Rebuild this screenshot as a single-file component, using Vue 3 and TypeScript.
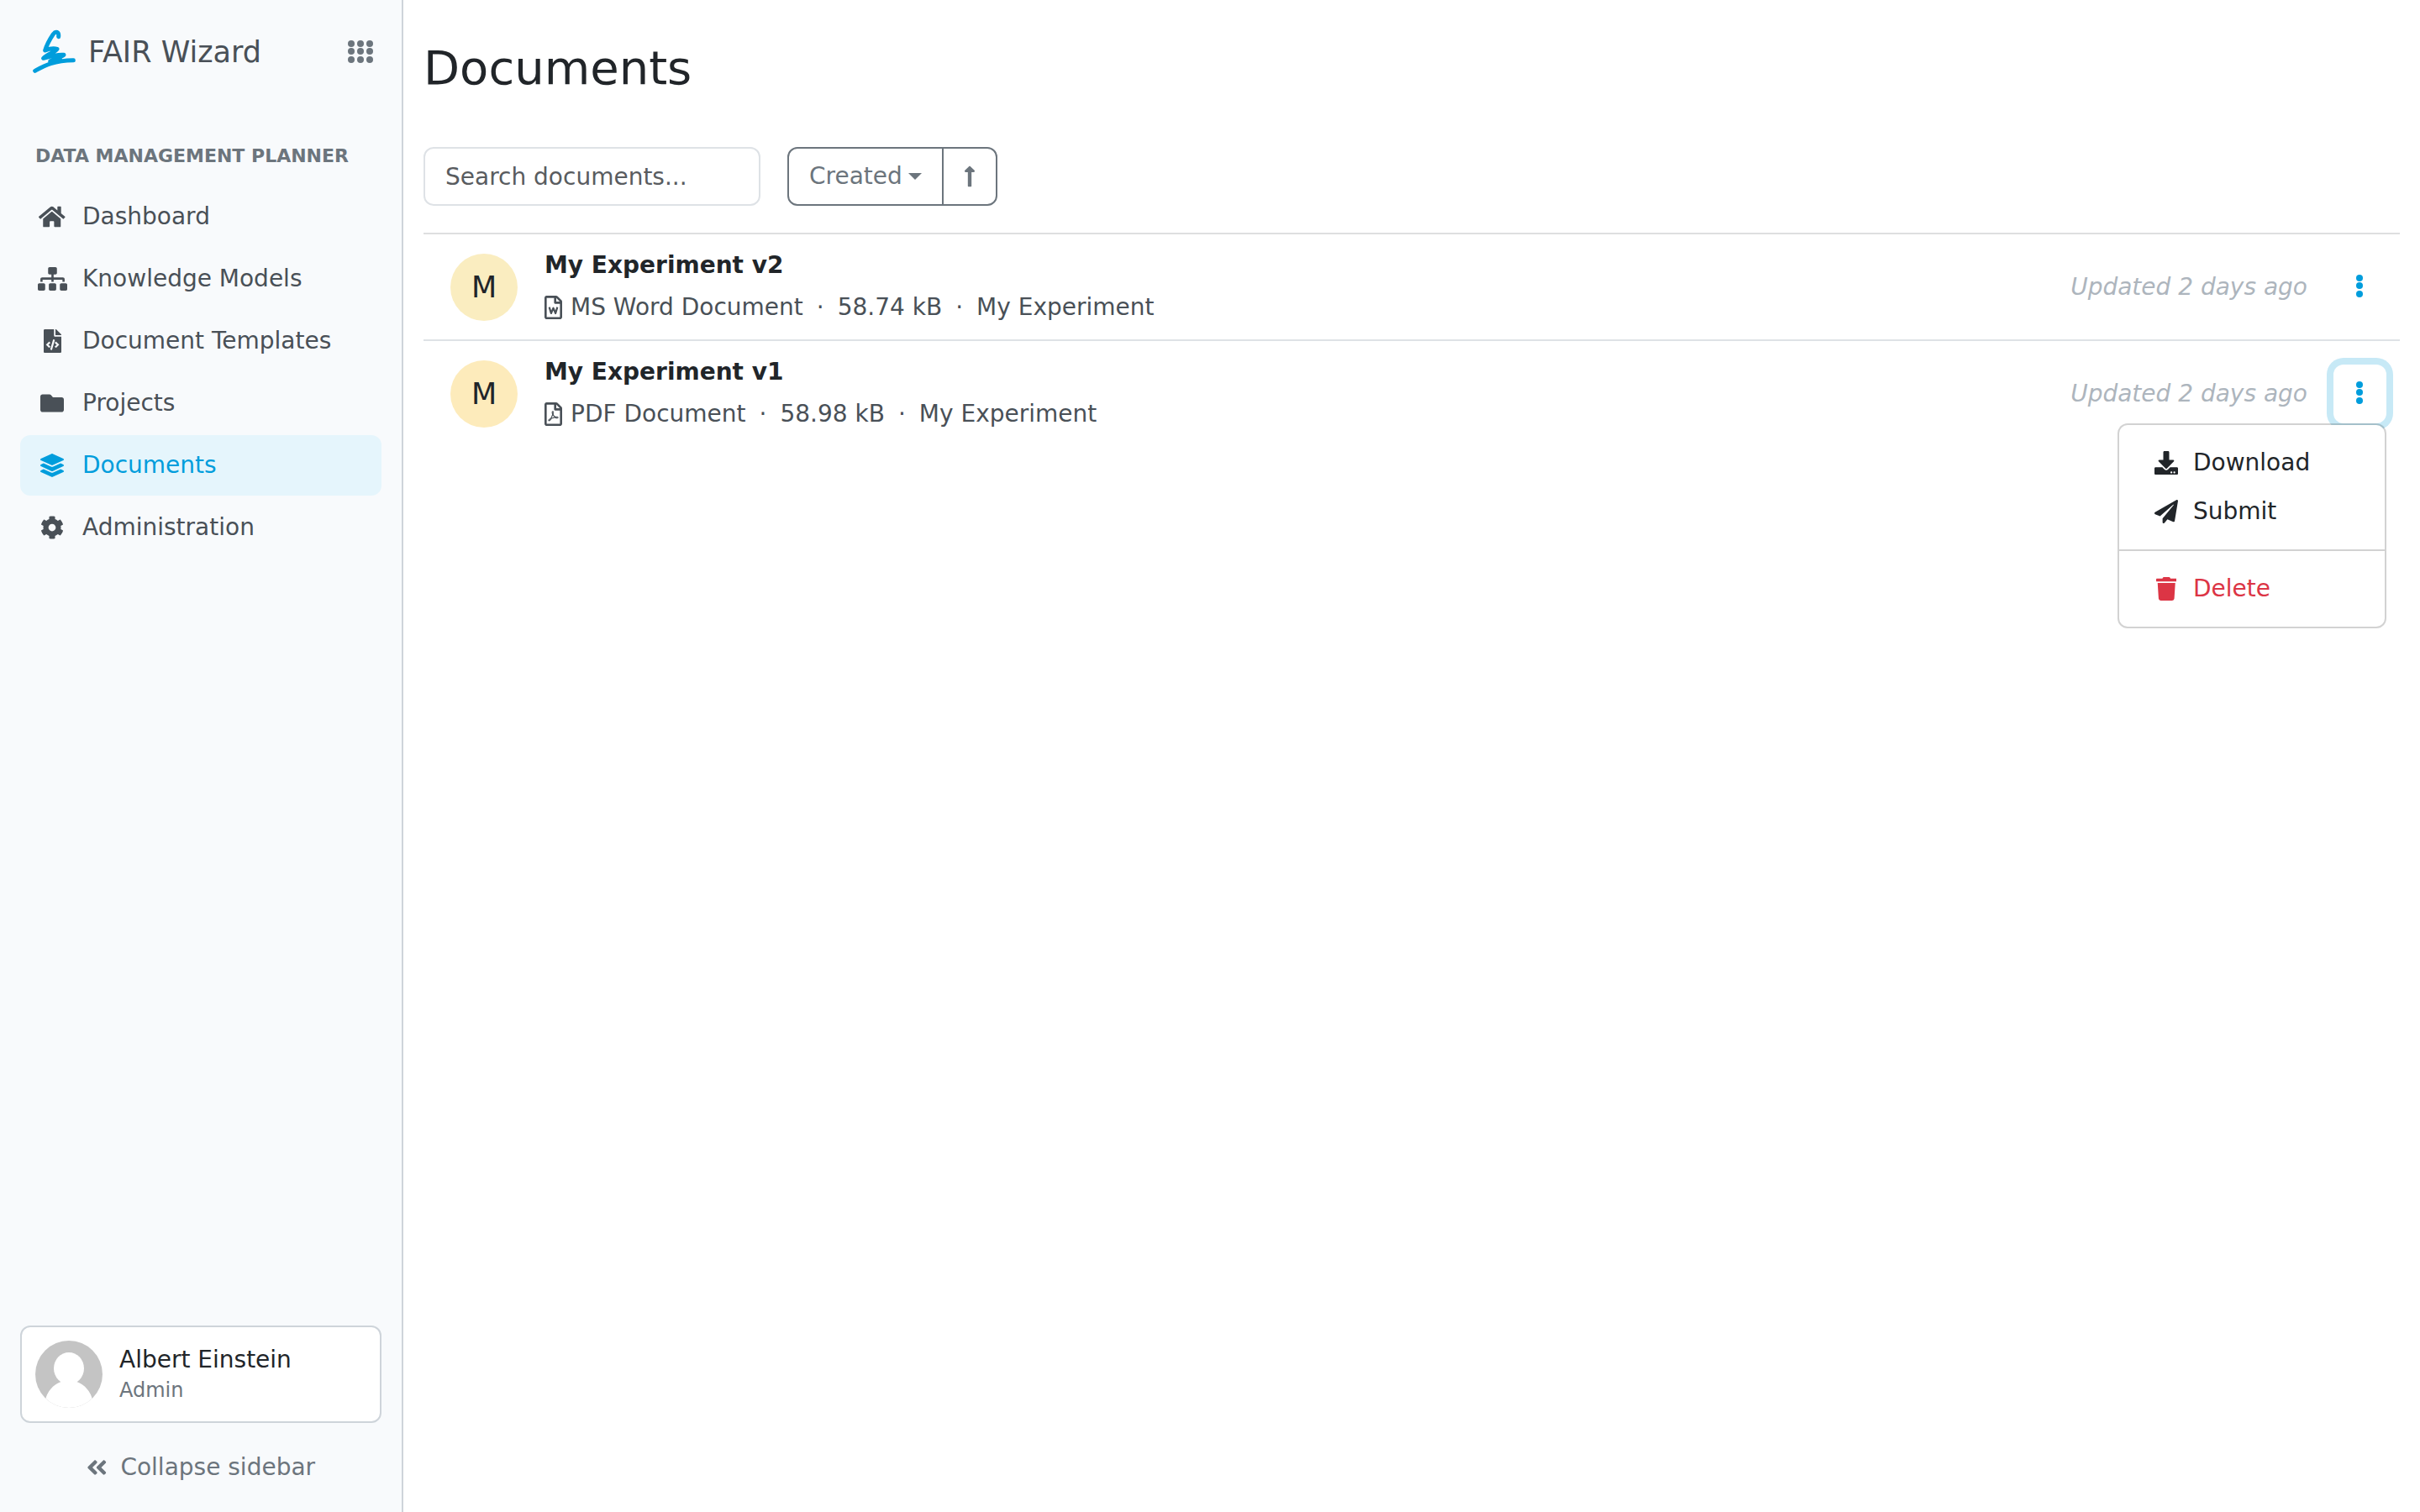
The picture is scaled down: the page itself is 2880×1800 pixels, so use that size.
<script setup lang="ts">
import { ref } from 'vue'

interface Icon {
  w: number
  d: string
}

const icons: Record<string, Icon> = {
  house: {
    w: 576,
    d: 'M280.37 148.26L96 300.11V464a16 16 0 0 0 16 16l112.06-.29a16 16 0 0 0 15.92-16V368a16 16 0 0 1 16-16h64a16 16 0 0 1 16 16v95.64a16 16 0 0 0 16 16.05L464 480a16 16 0 0 0 16-16V300L295.67 148.26a12.19 12.19 0 0 0-15.3 0zM571.6 251.47L488 182.56V44.05a12 12 0 0 0-12-12h-56a12 12 0 0 0-12 12v72.61L318.47 43a48 48 0 0 0-61 0L4.34 251.47a12 12 0 0 0-1.6 16.9l25.5 31A12 12 0 0 0 45.15 301l235.22-193.74a12.19 12.19 0 0 1 15.3 0L530.9 301a12 12 0 0 0 16.9-1.6l25.5-31a12 12 0 0 0-1.7-16.93z',
  },
  sitemap: {
    w: 640,
    d: 'M128 352H32c-17.67 0-32 14.33-32 32v96c0 17.67 14.33 32 32 32h96c17.67 0 32-14.33 32-32v-96c0-17.67-14.33-32-32-32zm-24-80h192v48h48v-48h192v48h48v-57.59c0-21.17-17.23-38.41-38.41-38.41H344v-64h40c17.67 0 32-14.33 32-32V32c0-17.67-14.33-32-32-32H256c-17.67 0-32 14.33-32 32v96c0 17.67 14.33 32 32 32h40v64H94.41C73.24 224 56 241.23 56 262.41V320h48v-48zm264 80h-96c-17.67 0-32 14.33-32 32v96c0 17.67 14.33 32 32 32h96c17.67 0 32-14.33 32-32v-96c0-17.67-14.33-32-32-32zm240 0h-96c-17.67 0-32 14.33-32 32v96c0 17.67 14.33 32 32 32h96c17.67 0 32-14.33 32-32v-96c0-17.67-14.33-32-32-32z',
  },
  code: {
    w: 384,
    d: 'M384 121.941V128H256V0h6.059c6.365 0 12.47 2.529 16.971 7.029l97.941 97.941A24.005 24.005 0 0 1 384 121.941zM248 160c-13.2 0-24-10.8-24-24V0H24C10.745 0 0 10.745 0 24v464c0 13.255 10.745 24 24 24h336c13.255 0 24-10.745 24-24V160H248zM123.206 400.505a5.4 5.4 0 0 1-7.633.246l-64.866-60.812a5.4 5.4 0 0 1 0-7.879l64.866-60.812a5.4 5.4 0 0 1 7.633.246l19.579 20.885a5.4 5.4 0 0 1-.372 7.747L101.65 336l40.763 35.874a5.4 5.4 0 0 1 .372 7.747l-19.579 20.884zm51.295 50.479l-27.97-8.121a5.402 5.402 0 0 1-3.667-6.692l61.44-211.626a5.402 5.402 0 0 1 6.692-3.667l27.97 8.121a5.4 5.4 0 0 1 3.667 6.692l-61.44 211.626a5.397 5.397 0 0 1-6.692 3.667zm160.792-111.045l-64.866 60.812a5.4 5.4 0 0 1-7.633-.246l-19.58-20.885a5.4 5.4 0 0 1 .372-7.747L284.35 336l-40.763-35.874a5.4 5.4 0 0 1-.372-7.747l19.58-20.885a5.4 5.4 0 0 1 7.633-.246l64.866 60.812a5.4 5.4 0 0 1-.001 7.879z',
  },
  folder: {
    w: 512,
    d: 'M464 128H290c-16 0-22-6-32-18l-22-26c-11-13-22-20-40-20H48C21.49 64 0 85.49 0 112v288c0 26.51 21.49 48 48 48h416c26.51 0 48-21.49 48-48V176c0-26.51-21.49-48-48-48z',
  },
  layers: {
    w: 512,
    d: 'M12.41 148.02l232.94 105.67c6.8 3.09 14.49 3.09 21.29 0l232.94-105.67c16.55-7.51 16.55-32.52 0-40.03L266.65 2.31a25.607 25.607 0 0 0-21.29 0L12.41 107.98c-16.55 7.51-16.55 32.53 0 40.04zm487.18 88.28l-58.09-26.33-161.64 73.27c-7.56 3.43-15.59 5.17-23.86 5.17s-16.29-1.74-23.86-5.17L70.51 209.97l-58.1 26.33c-16.55 7.5-16.55 32.5 0 40l232.94 105.59c6.8 3.08 14.49 3.08 21.29 0L499.59 276.3c16.55-7.5 16.55-32.5 0-40zm0 127.8l-57.87-26.23-161.86 73.37c-7.56 3.43-15.59 5.17-23.86 5.17s-16.29-1.74-23.86-5.17L70.29 337.87 12.41 364.1c-16.55 7.5-16.55 32.5 0 40l232.94 105.59c6.8 3.08 14.49 3.08 21.29 0L499.59 404.1c16.55-7.5 16.55-32.5 0-40z',
  },
  gear: {
    w: 512,
    d: 'M487.4 315.7l-42.6-24.6c4.3-23.2 4.3-47 0-70.2l42.6-24.6c4.9-2.8 7.1-8.6 5.5-14-11.1-35.6-30-67.8-54.7-94.6-3.8-4.1-10-5.1-14.8-2.3L380.8 110c-17.9-15.4-38.5-27.3-60.8-35.1V25.8c0-5.6-3.9-10.5-9.4-11.7-36.7-8.2-74.3-7.8-109.2 0-5.5 1.2-9.4 6.1-9.4 11.7V75c-22.2 7.9-42.8 19.8-60.8 35.1L88.7 85.5c-4.9-2.8-11-1.9-14.8 2.3-24.7 26.7-43.6 58.9-54.7 94.6-1.7 5.4.6 11.2 5.5 14L67.3 221c-4.3 23.2-4.3 47 0 70.2l-42.6 24.6c-4.9 2.8-7.1 8.6-5.5 14 11.1 35.6 30 67.8 54.7 94.6 3.8 4.1 10 5.1 14.8 2.3l42.6-24.6c17.9 15.4 38.5 27.3 60.8 35.1v49.2c0 5.6 3.9 10.5 9.4 11.7 36.7 8.2 74.3 7.8 109.2 0 5.5-1.2 9.4-6.1 9.4-11.7v-49.2c22.2-7.9 42.8-19.8 60.8-35.1l42.6 24.6c4.9 2.8 11 1.9 14.8-2.3 24.7-26.7 43.6-58.9 54.7-94.6 1.5-5.5-.7-11.3-5.6-14.1zM256 336c-44.1 0-80-35.9-80-80s35.9-80 80-80 80 35.9 80 80-35.9 80-80 80z',
  },
  download: {
    w: 512,
    d: 'M216 0h80c13.3 0 24 10.7 24 24v168h87.7c17.8 0 26.7 21.5 14.1 34.1L269.7 378.3c-7.5 7.5-19.8 7.5-27.3 0L90.1 226.1c-12.6-12.6-3.7-34.1 14.1-34.1H192V24c0-13.3 10.7-24 24-24zm296 376v112c0 13.3-10.7 24-24 24H24c-13.3 0-24-10.7-24-24V376c0-13.3 10.7-24 24-24h146.7l49 49c20.1 20.1 52.5 20.1 72.6 0l49-49H488c13.3 0 24 10.7 24 24zm-124 88c0-11-9-20-20-20s-20 9-20 20 9 20 20 20 20-9 20-20zm64 0c0-11-9-20-20-20s-20 9-20 20 9 20 20 20 20-9 20-20z',
  },
  plane: {
    w: 512,
    d: 'M476 3.2L12.5 270.6c-18.1 10.4-15.8 35.6 2.2 43.2L121 358.4l287.3-253.2c5.5-4.9 13.3 2.6 8.6 8.3L176 407v80.5c0 23.6 28.5 32.9 42.5 15.8L282 426l124.6 52.2c14.2 6 30.4-2.9 33-18.2l72-432C515 7.8 493.3-6.8 476 3.2z',
  },
  trash: {
    w: 448,
    d: 'M432 32H312l-9.4-18.7A24 24 0 0 0 281.1 0H166.8a23.72 23.72 0 0 0-21.4 13.3L136 32H16A16 16 0 0 0 0 48v32a16 16 0 0 0 16 16h416a16 16 0 0 0 16-16V48a16 16 0 0 0-16-16zM53.2 467a48 48 0 0 0 47.9 45h245.8a48 48 0 0 0 47.9-45L416 128H32z',
  },
  collapse: {
    w: 448,
    d: 'M223.7 239l136-136c9.4-9.4 24.6-9.4 33.9 0l22.6 22.6c9.4 9.4 9.4 24.6 0 33.9L319.9 256l96.4 96.4c9.4 9.4 9.4 24.6 0 33.9L393.7 409c-9.4 9.4-24.6 9.4-33.9 0l-136-136c-9.5-9.4-9.5-24.6-.1-34zm-192 34l136 136c9.4 9.4 24.6 9.4 33.9 0l22.6-22.6c9.4-9.4 9.4-24.6 0-33.9L127.9 256l96.4-96.4c9.4-9.4 9.4-24.6 0-33.9L201.7 103c-9.4-9.4-24.6-9.4-33.9 0l-136 136c-9.5 9.4-9.5 24.6-.1 34z',
  },
  arrowUp: {
    w: 256,
    d: 'M88 166.059V468c0 6.627 5.373 12 12 12h56c6.627 0 12-5.373 12-12V166.059h46.059c21.382 0 32.09-25.851 16.971-40.971l-86.059-86.059c-9.373-9.373-24.569-9.373-33.941 0l-86.059 86.059c-15.119 15.119-4.411 40.971 16.971 40.971H88z',
  },
}

const filePath =
  'M369.9 97.9L286 14C277 5 264.8-.1 252.1-.1H48C21.5 0 0 21.5 0 48v416c0 26.5 21.5 48 48 48h288c26.5 0 48-21.5 48-48V131.9c0-12.7-5.1-25-14.1-34zM332.1 128H256V51.9l76.1 76.1zM48 464V48h160v104c0 13.3 10.7 24 24 24h104v288H48z'
const pdfPath =
  'M298.2 314.5c-12.2-12-47-8.7-64.4-6.5-17.2-10.5-28.7-25-36.8-46.3 3.9-16.1 10.1-40.6 5.4-56-4.2-26.2-37.8-23.6-42.6-5.9-4.4 16.1-.4 38.5 7 67.1-10 23.9-24.9 56-35.4 74.4-20 10.3-47 26.2-51 46.2-3.3 15.8 26 55.2 76.1-31.2 22.4-7.4 46.8-16.5 68.4-20.1 18.9 10.2 41 17 55.8 17 25.5 0 28-28.2 17.5-38.7zm-198.1 77.8c5.1-13.7 24.5-29.5 30.4-35-19 30.3-30.4 35.7-30.4 35zm81.6-190.6c7.4 0 6.7 32.1 1.8 40.8-4.4-13.9-4.3-40.8-1.8-40.8zm-24.4 136.6c9.7-16.9 18-37 24.7-54.7 8.3 15.1 18.9 27.2 30.1 35.5-20.8 4.3-38.9 13.1-54.8 19.2zm131.6-5s-5 6-37.3-7.8c35.1-2.6 40.9 5.4 37.3 7.8z'

const navItems = [
  { label: 'Dashboard', icon: 'house' },
  { label: 'Knowledge Models', icon: 'sitemap' },
  { label: 'Document Templates', icon: 'code' },
  { label: 'Projects', icon: 'folder' },
  { label: 'Documents', icon: 'layers' },
  { label: 'Administration', icon: 'gear' },
]
const activeItem = ref('Documents')

const documents = [
  { id: 2, name: 'My Experiment v2', kind: 'word', format: 'MS Word Document', size: '58.74 kB', project: 'My Experiment', tint: '#faedc0' },
  { id: 1, name: 'My Experiment v1', kind: 'pdf', format: 'PDF Document', size: '58.98 kB', project: 'My Experiment', tint: '#fdebbb' },
]

const query = ref('')
const sortBy = ref('Created')
const openMenu = ref<number | null>(1)

function toggleMenu(id: number) {
  openMenu.value = openMenu.value === id ? null : id
}
</script>

<template>
  <div class="app">
    <aside class="sidebar">
      <header class="brand">
        <a href="#" class="brand-link">
          <svg class="logo" viewBox="114 106 159 159" fill="none" stroke="currentColor" stroke-width="15" stroke-linecap="round" stroke-linejoin="round">
            <path d="M209 132C211 114 199 111 190 123C178 141 167 161 161 181C178 174 194 173 204 176C197 187 168 195 155 209C180 202 208 195 228 197C214 206 196 211 180 220" />
            <path d="M125 254C158 236 190 217 262 216M180 220L215 214" />
          </svg>
          <span>FAIR Wizard</span>
        </a>
        <button type="button" class="apps" aria-label="Apps">
          <svg class="apps-icon" viewBox="0 0 30 28" fill="currentColor">
            <template v-for="y in [4, 13, 23]" :key="y">
              <circle v-for="x in [4, 15, 26]" :key="x" :cx="x" :cy="y" r="4" />
            </template>
          </svg>
        </button>
      </header>

      <h2 class="section">DATA MANAGEMENT PLANNER</h2>
      <nav class="nav">
        <a
          v-for="item in navItems"
          :key="item.label"
          href="#"
          class="nav-item"
          :class="{ active: item.label === activeItem }"
          @click.prevent="activeItem = item.label"
        >
          <span class="nav-icon">
            <svg class="icon" :viewBox="`0 0 ${icons[item.icon].w} 512`" fill="currentColor"><path :d="icons[item.icon].d" /></svg>
          </span>
          <span>{{ item.label }}</span>
        </a>
      </nav>

      <footer class="side-footer">
        <button type="button" class="profile">
          <svg class="photo" viewBox="0 0 80 80">
            <defs>
              <clipPath id="photo-clip"><circle cx="40" cy="40" r="40" /></clipPath>
            </defs>
            <g clip-path="url(#photo-clip)">
              <rect width="80" height="80" fill="#c4c4c4" />
              <ellipse cx="40" cy="33" rx="18" ry="19" fill="#fff" />
              <path d="M10 80C12 60 22 52 31 49H49C58 52 68 60 70 80Z" fill="#fff" />
            </g>
          </svg>
          <span class="profile-text">
            <span class="profile-name">Albert Einstein</span>
            <span class="profile-role">Admin</span>
          </span>
        </button>
        <button type="button" class="collapse">
          <svg class="icon" :viewBox="`0 0 ${icons.collapse.w} 512`" fill="currentColor"><path :d="icons.collapse.d" /></svg>
          <span>Collapse sidebar</span>
        </button>
      </footer>
    </aside>

    <main class="main">
      <h1 class="title">Documents</h1>

      <div class="toolbar">
        <input v-model="query" class="search" type="text" placeholder="Search documents..." aria-label="Search documents..." />
        <div class="sort">
          <div class="sort-field">
            <select v-model="sortBy" class="sort-select" aria-label="Created">
              <option>Created</option>
            </select>
            <span class="caret"></span>
          </div>
          <button type="button" class="sort-direction" aria-label="Sort direction">
            <svg class="icon" viewBox="0 0 256 512" fill="currentColor"><path :d="icons.arrowUp.d" /></svg>
          </button>
        </div>
      </div>

      <ul class="list">
        <li v-for="doc in documents" :key="doc.id" class="row">
          <span class="initial" :style="{ backgroundColor: doc.tint }">M</span>
          <div class="details">
            <a href="#" class="name">{{ doc.name }}</a>
            <div class="meta">
              <span class="format">
                <svg class="icon" viewBox="0 0 384 512" fill="currentColor">
                  <path :d="filePath" />
                  <path v-if="doc.kind === 'pdf'" :d="pdfPath" />
                  <path v-else d="M104 250L144 384L192 268L240 384L280 250" fill="none" stroke="currentColor" stroke-width="40" stroke-linejoin="round" />
                </svg>
                <span>{{ doc.format }}</span>
              </span>
              <span>·</span>
              <span>{{ doc.size }}</span>
              <span>·</span>
              <a href="#" class="project">{{ doc.project }}</a>
            </div>
          </div>
          <span class="updated">Updated 2 days ago</span>
          <div class="actions">
            <button type="button" class="more" :class="{ open: openMenu === doc.id }" aria-label="Actions" @click="toggleMenu(doc.id)">
              <svg class="dots" viewBox="0 0 8 28" fill="currentColor">
                <circle cx="4" cy="4" r="4" />
                <circle cx="4" cy="13" r="4" />
                <circle cx="4" cy="23" r="4" />
              </svg>
            </button>
            <div v-if="openMenu === doc.id" class="menu">
              <a href="#" class="menu-item">
                <span class="menu-icon"><svg class="icon" viewBox="0 0 512 512" fill="currentColor"><path :d="icons.download.d" /></svg></span>
                <span>Download</span>
              </a>
              <a href="#" class="menu-item">
                <span class="menu-icon"><svg class="icon" viewBox="0 0 512 512" fill="currentColor"><path :d="icons.plane.d" /></svg></span>
                <span>Submit</span>
              </a>
              <hr class="menu-divider" />
              <a href="#" class="menu-item danger">
                <span class="menu-icon"><svg class="icon" viewBox="0 0 448 512" fill="currentColor"><path :d="icons.trash.d" /></svg></span>
                <span>Delete</span>
              </a>
            </div>
          </div>
        </li>
      </ul>
    </main>
  </div>
</template>

<style>
body {
  margin: 0;
  background: #fff;
}
</style>

<style scoped>
.app,
.app * {
  box-sizing: border-box;
}
.app {
  display: flex;
  min-height: 100vh;
  color: #212529;
  font-family: 'DejaVu Sans', sans-serif;
  font-size: 28px;
  line-height: 42px;
}
a {
  color: inherit;
  text-decoration: none;
}
button,
input,
select {
  margin: 0;
  font: inherit;
  color: inherit;
  background: none;
  border: 0;
}
button {
  padding: 0;
  cursor: pointer;
}
svg {
  display: block;
  flex: none;
}
.icon {
  height: 28px;
  width: auto;
}

.sidebar {
  display: flex;
  flex-direction: column;
  flex: none;
  width: 480px;
  padding: 0 24px;
  background: #f8fafc;
  border-right: 2px solid #ced4da;
}
.brand {
  display: flex;
  align-items: center;
  justify-content: space-between;
  height: 123px;
  padding: 0 10px 0 14px;
}
.brand-link {
  display: flex;
  align-items: center;
  gap: 14px;
  color: #495057;
  font-size: 35px;
}
.logo {
  width: 53px;
  height: 53px;
  color: #009ddc;
}
.apps {
  color: #6c757d;
}
.apps-icon {
  width: 30px;
  height: 28px;
}
.section {
  margin: 42px 0 15px;
  padding: 0 18px;
  color: #6c757d;
  font-size: 22px;
  line-height: 42px;
  white-space: nowrap;
}
.nav {
  display: flex;
  flex-direction: column;
  gap: 2px;
}
.nav-item {
  display: flex;
  align-items: center;
  gap: 18px;
  height: 72px;
  padding: 0 20px;
  border-radius: 12px;
  color: #495057;
}
.nav-item.active {
  background: #e5f5fc;
  color: #009ddc;
}
.nav-icon {
  display: flex;
  justify-content: center;
  width: 36px;
}
.side-footer {
  margin-top: auto;
}
.profile {
  display: flex;
  align-items: center;
  gap: 20px;
  width: 100%;
  height: 116px;
  padding: 0 16px;
  background: #fff;
  border: 2px solid #ced4da;
  border-radius: 12px;
  text-align: left;
}
.photo {
  width: 80px;
  height: 80px;
}
.profile-text {
  display: flex;
  flex-direction: column;
  padding-top: 2px;
  line-height: 36px;
}
.profile-role {
  color: #6c757d;
  font-size: 24px;
}
.collapse {
  display: flex;
  align-items: center;
  justify-content: center;
  gap: 16px;
  width: 100%;
  height: 106px;
  color: #6c757d;
}

.main {
  flex: 1;
  min-width: 0;
  padding: 0 24px;
}
.title {
  margin: 47px 0 61px;
  font-size: 56px;
  font-weight: 400;
  line-height: 67px;
}
.toolbar {
  display: flex;
  gap: 32px;
  margin-bottom: 32px;
}
.search {
  width: 401px;
  height: 70px;
  padding: 0 24px;
  border: 2px solid #dee2e6;
  border-radius: 12px;
  background: #fff;
}
.search::placeholder {
  color: #595c5f;
  opacity: 1;
}
.sort {
  display: flex;
  height: 70px;
  border: 2px solid #6c757d;
  border-radius: 12px;
  color: #6c757d;
}
.sort-field {
  display: grid;
  align-items: center;
}
.sort-select {
  grid-area: 1 / 1;
  height: 66px;
  width: 182px;
  padding: 0 24px;
  appearance: none;
}
.caret {
  grid-area: 1 / 1;
  justify-self: end;
  margin-right: 24px;
  border-top: 8px solid currentColor;
  border-left: 8px solid transparent;
  border-right: 8px solid transparent;
  pointer-events: none;
}
.sort-direction {
  display: flex;
  align-items: center;
  justify-content: center;
  width: 64px;
  border-left: 2px solid #6c757d;
}

.list {
  margin: 0;
  padding: 0;
  list-style: none;
  border-top: 2px solid #dedfe0;
}
.row {
  display: flex;
  align-items: center;
  padding: 16px 16px 16px 32px;
}
.row + .row {
  border-top: 2px solid #dee2e6;
}
.initial {
  flex: none;
  width: 80px;
  border-radius: 50%;
  font-size: 35px;
  line-height: 80px;
  text-align: center;
}
.details {
  display: flex;
  flex-direction: column;
  gap: 8px;
  flex: 1;
  min-width: 0;
  padding-bottom: 1px;
  margin-left: 32px;
}
.name {
  font-weight: 700;
}
.meta {
  display: flex;
  gap: 16px;
  color: #495057;
}
.format {
  display: flex;
  align-items: center;
  gap: 10px;
}
.updated {
  margin-right: 31px;
  color: #adb5bd;
  font-style: italic;
}
.actions {
  position: relative;
}
.more {
  display: flex;
  align-items: center;
  justify-content: center;
  width: 63px;
  height: 70px;
  padding: 0 1px 2px 0;
  border-radius: 12px;
  color: #009ddc;
}
.more.open {
  box-shadow: 0 0 0 8px #c7e9f6;
}
.dots {
  width: 8px;
  height: 28px;
}
.menu {
  position: absolute;
  top: 100%;
  right: 0;
  z-index: 1;
  width: 320px;
  padding: 16px 0;
  background: #fff;
  background-clip: padding-box;
  border: 2px solid rgba(0, 0, 0, 0.175);
  border-radius: 12px;
}
.menu-item {
  display: flex;
  align-items: center;
  gap: 16px;
  height: 58px;
  padding: 0 40px;
}
.menu-icon {
  display: flex;
  justify-content: center;
  width: 32px;
}
.menu-divider {
  height: 2px;
  margin: 16px 0;
  border: 0;
  background: #d2d2d2;
}
.danger {
  color: #dc3545;
}
</style>
